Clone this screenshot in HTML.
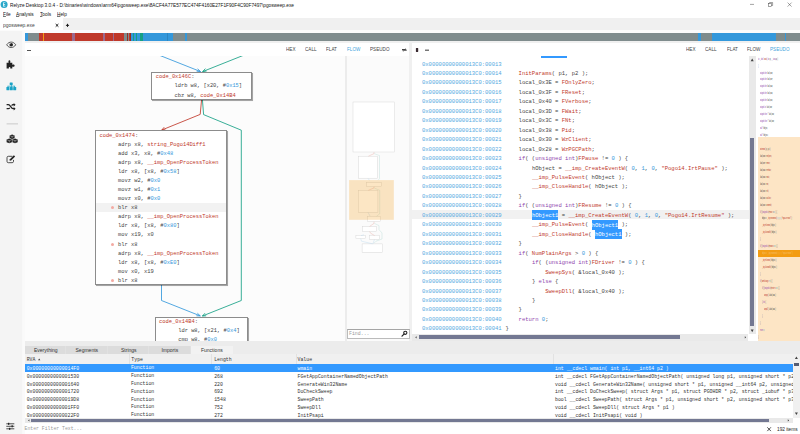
<!DOCTYPE html><html><head><meta charset="utf-8"><title>Relyze Desktop</title><style>
html,body{margin:0;padding:0;background:#fff;}
body{width:800px;height:434px;overflow:hidden;position:relative;font-family:"Liberation Sans",sans-serif;}
#app{position:absolute;left:0;top:0;width:800px;height:434px;overflow:hidden;background:#fff;}
#app div{position:absolute;white-space:pre;}
.s{font-family:"Liberation Sans",sans-serif;}
.m{font-family:"Liberation Mono",monospace;}
.r{color:#c0392b}.b{color:#3498db}.p{color:#8e44ad}.a{color:#52a8e1}.k{color:#444}
.sel{background:#3399ff;color:#fff;padding:1.5px 0 1.55px}
svg{position:absolute;overflow:visible}
</style></head><body><div id="app">
<svg style="left:0;top:0" width="10" height="10" viewBox="0 0 10 10"><circle cx="4.1" cy="4.4" r="3.5" fill="#2aa7c9"/><path d="M3 2.400h2.300v.700h-1.500v1h1.300v.700h-1.300v1h1.500v.700H3z" fill="#fff" opacity=".92"/></svg>
<div class="s" style="left:9.6px;top:0.70px;font-size:5.2px;line-height:8px;color:#111;transform:scaleX(0.916);transform-origin:0 50%;">Relyze Desktop 3.0.4 - D:\binaries\windows\arm64\pgosweep.exe\8ACF4A77E577EC474F4160E27F1F90F4C90F7497\pgosweep.exe</div>
<svg style="left:740px;top:0" width="60" height="10" viewBox="0 0 60 10"><g stroke="#333" stroke-width=".45" fill="none"><path d="M10 4.400h4"/><rect x="28.6" y="3.4" width="3" height="3"/><path d="M29.6 3.4v-.9h3v3h-1"/><path d="M47.6 2.6l4 4M51.6 2.6l-4 4"/></g></svg>
<div class="s" style="left:2.5px;top:9.7px;font-size:5.2px;line-height:8px;color:#111;transform:scaleX(.915);transform-origin:0 50%"><u style="text-decoration-thickness:.3px;text-underline-offset:.4px;text-decoration-color:#777">F</u>ile</div>
<div class="s" style="left:16px;top:9.7px;font-size:5.2px;line-height:8px;color:#111;transform:scaleX(.915);transform-origin:0 50%"><u style="text-decoration-thickness:.3px;text-underline-offset:.4px;text-decoration-color:#777">A</u>nalysis</div>
<div class="s" style="left:40.2px;top:9.7px;font-size:5.2px;line-height:8px;color:#111;transform:scaleX(.915);transform-origin:0 50%"><u style="text-decoration-thickness:.3px;text-underline-offset:.4px;text-decoration-color:#777">T</u>ools</div>
<div class="s" style="left:57px;top:9.7px;font-size:5.2px;line-height:8px;color:#111;transform:scaleX(.915);transform-origin:0 50%"><u style="text-decoration-thickness:.3px;text-underline-offset:.4px;text-decoration-color:#777">H</u>elp</div>
<div style="left:0px;top:17.7px;width:800px;height:12.6px;background:#f0f0f0;"></div>
<div style="left:0px;top:17.7px;width:62.5px;height:12.6px;background:#fff;"></div>
<div style="left:0px;top:30.3px;width:800px;height:2.7px;background:#fbfbfb;"></div>
<div class="s" style="left:3.1px;top:21.00px;font-size:5.2px;line-height:8px;color:#444;transform:scaleX(0.945);transform-origin:0 50%;">pgosweep.exe</div>
<svg style="left:54px;top:22px" width="18" height="7" viewBox="54 22 18 7"><path d="M55.700 24l2.700 2.700M58.400 24l-2.700 2.700" stroke="#1a1a1a" stroke-width="1" fill="none"/><path d="M67.500 23.800v3.100M65.950 25.350h3.100" stroke="#1a1a1a" stroke-width="1" fill="none"/></svg>
<div style="left:0px;top:31px;width:24.5px;height:403px;background:linear-gradient(90deg,#f4f4f4 0,#f4f4f4 21.8px,#fafafa 22.6px,#fafafa 24.5px);"></div>
<div style="left:24.5px;top:33px;width:775.5px;height:8px;background:#7f8c8d;"></div>
<div style="left:24.5px;top:33px;width:3.5px;height:8px;background:#3498db;"></div>
<div style="left:39px;top:33px;width:84.5px;height:8px;background:#c0392b;"></div>
<div style="left:43px;top:33px;width:0.8px;height:8px;background:#f39c12;"></div>
<div style="left:72.4px;top:33px;width:2.2px;height:8px;background:#9b6a8f;"></div>
<div style="left:103px;top:33px;width:1.6px;height:8px;background:#9b6a8f;"></div>
<div style="left:113px;top:33px;width:1px;height:8px;background:#9b6a8f;"></div>
<div style="left:126.5px;top:33px;width:4.5px;height:8px;background:#962d22;"></div>
<div style="left:127.6px;top:33px;width:0.6px;height:8px;background:#7f8c8d;"></div>
<div style="left:129.3px;top:33px;width:0.5px;height:8px;background:#c0392b;"></div>
<div style="left:131px;top:33px;width:42px;height:8px;background:#3498db;"></div>
<div style="left:133px;top:33px;width:1.4px;height:8px;background:#16a085;"></div>
<div style="left:136px;top:33px;width:1px;height:8px;background:#16a085;"></div>
<div style="left:140px;top:33px;width:3px;height:8px;background:#16a085;"></div>
<div style="left:167px;top:33px;width:0.5px;height:8px;background:#2e86c1;"></div>
<div style="left:185px;top:33px;width:2px;height:8px;background:#3498db;"></div>
<div style="left:697.5px;top:33px;width:3.5px;height:8px;background:#3498db;"></div>
<div style="left:712px;top:33px;width:63.5px;height:8px;background:#3498db;"></div>
<div style="left:785px;top:33px;width:0.6px;height:8px;background:#3498db;"></div>
<div style="left:24.5px;top:41px;width:775.5px;height:2.1px;background:#f0f0f0;"></div>
<div style="left:24.5px;top:43.1px;width:385px;height:12.5px;background:#fff;"></div>
<div style="left:24.5px;top:55.5px;width:321px;height:285.5px;background:#fcfcfc;"></div>
<div style="left:345.3px;top:55.5px;width:1.7px;height:285.5px;background:#ececec;"></div>
<div style="left:347px;top:55.5px;width:62.5px;height:285.5px;background:#fbfbfb;"></div>
<div style="left:409.3px;top:43.1px;width:2.7px;height:297.6px;background:#f0f0f0;"></div>
<div style="left:412px;top:43.1px;width:388px;height:297.6px;background:#fff;"></div>
<div class="s" style="left:286px;top:45.00px;font-size:5.2px;line-height:8px;color:#444;transform:scaleX(0.89);transform-origin:0 50%;">HEX</div>
<div class="s" style="left:305px;top:45.00px;font-size:5.2px;line-height:8px;color:#444;transform:scaleX(0.89);transform-origin:0 50%;">CALL</div>
<div class="s" style="left:326px;top:45.00px;font-size:5.2px;line-height:8px;color:#444;transform:scaleX(0.89);transform-origin:0 50%;">FLAT</div>
<div class="s" style="left:346.7px;top:45.00px;font-size:5.2px;line-height:8px;color:#3fa4dc;transform:scaleX(0.89);transform-origin:0 50%;">FLOW</div>
<div class="s" style="left:369.5px;top:45.00px;font-size:5.2px;line-height:8px;color:#444;transform:scaleX(0.89);transform-origin:0 50%;">PSEUDO</div>
<div class="s" style="left:686.4px;top:45.00px;font-size:5.2px;line-height:8px;color:#444;transform:scaleX(0.89);transform-origin:0 50%;">HEX</div>
<div class="s" style="left:705.3px;top:45.00px;font-size:5.2px;line-height:8px;color:#444;transform:scaleX(0.89);transform-origin:0 50%;">CALL</div>
<div class="s" style="left:726.6px;top:45.00px;font-size:5.2px;line-height:8px;color:#444;transform:scaleX(0.89);transform-origin:0 50%;">FLAT</div>
<div class="s" style="left:747px;top:45.00px;font-size:5.2px;line-height:8px;color:#444;transform:scaleX(0.89);transform-origin:0 50%;">FLOW</div>
<div class="s" style="left:770px;top:45.00px;font-size:5.2px;line-height:8px;color:#3fa4dc;transform:scaleX(0.89);transform-origin:0 50%;">PSEUDO</div>
<div style="left:27.1px;top:49.7px;width:3.8px;height:1.1px;background:#555;"></div>
<svg style="left:400px;top:44px" width="32" height="10" viewBox="400 44 32 10"><g fill="#444"><path d="M402 49.100h3.200v-.800l1.500 1.200l-1.500 .4H402zM406.700 51h-3.200v.800l-1.500-1.200l1.500-.4h3.200z"/><rect x="415.900" y="47.900" width="2.300" height="4.100" rx=".4" fill="#3a2a30"/><path d="M425 49.600h4v1.200h-4z" fill="#555"/></g></svg>
<div id="graph" style="left:24.5px;top:55.5px;width:320.8px;height:285px;overflow:hidden">
<svg style="left:-24.5px;top:-55.5px" width="800" height="434" viewBox="0 0 800 434"><g fill="none" stroke-width="0.85" stroke-linejoin="round"><path stroke="#3498db" d="M155 53.5L200.6 71.6M197.6 68.8L200.6 71.6L196.6 71.2"/><path stroke="#16a085" d="M248 53.5L202.6 71.6M205.4 68.6L202.6 71.6L206.6 71"/><path stroke="#c0392b" d="M201.6 99.5L200.2 114.4L161.8 130M164.2 127.2L161.8 130L165.4 129.8"/><path stroke="#16a085" d="M202.4 99.5L203.6 114.6L241.3 130.2L241.3 300.5L202.4 316M205 313.2L202.4 316L206.2 315.8"/><path stroke="#3498db" d="M161.5 285L161.5 300.5L200.3 315.9M197.4 313.2L200.3 315.9L196.4 315.8"/></g></svg>
<div style="left:126.80px;top:16.30px;width:100.5px;height:27.9px;background:#fff;border:1px solid #8c8c8c;box-sizing:border-box;box-shadow:.5px .5px .6px rgba(0,0,0,.35);"></div>
<div class="m k" style="left:131.30px;top:17.20px;font-size:5.37px;line-height:9px"><span class="r">code_0x146C</span>:</div>
<div class="m k" style="left:150.00px;top:26.20px;font-size:5.37px;line-height:9px">ldrb w8, [x20, #<span class="b">0x15</span>]</div>
<div class="m k" style="left:150.00px;top:36.40px;font-size:5.37px;line-height:9px">cbz w8, <span class="r">code_0x14B4</span></div>
<div style="left:70.90px;top:74.50px;width:132.1px;height:155.4px;background:#fff;border:1px solid #8c8c8c;box-sizing:border-box;box-shadow:.5px .5px .6px rgba(0,0,0,.35);"></div>
<div style="left:71.90px;top:147.70px;width:130.1px;height:9px;background:#f2f2f2;"></div>
<div class="m k" style="left:74.90px;top:75.00px;font-size:5.41px;line-height:9px"><span class="r">code_0x1474</span>:</div>
<div class="m k" style="left:93.50px;top:84.09px;font-size:5.41px;line-height:9px">adrp x8, <span class="r">string_Pogo14Diff1</span></div>
<div class="m k" style="left:93.50px;top:93.18px;font-size:5.41px;line-height:9px">add x3, x8, #<span class="b">0x48</span></div>
<div class="m k" style="left:93.50px;top:102.27px;font-size:5.41px;line-height:9px">adrp x8, <span class="r">__imp_OpenProcessToken</span></div>
<div class="m k" style="left:93.50px;top:111.36px;font-size:5.41px;line-height:9px">ldr x8, [x8, #<span class="b">0x58</span>]</div>
<div class="m k" style="left:93.50px;top:120.45px;font-size:5.41px;line-height:9px">movz w2, #<span class="b">0x0</span></div>
<div class="m k" style="left:93.50px;top:129.54px;font-size:5.41px;line-height:9px">movz w1, #<span class="b">0x1</span></div>
<div class="m k" style="left:93.50px;top:138.63px;font-size:5.41px;line-height:9px">movz x0, #<span class="b">0x0</span></div>
<div style="left:86.10px;top:150.92px;width:3px;height:3px;background:#f3aaa2;border-radius:50%"></div>
<div class="m k" style="left:93.50px;top:147.72px;font-size:5.41px;line-height:9px">blr x8</div>
<div class="m k" style="left:93.50px;top:156.81px;font-size:5.41px;line-height:9px">adrp x8, <span class="r">__imp_OpenProcessToken</span></div>
<div class="m k" style="left:93.50px;top:165.90px;font-size:5.41px;line-height:9px">ldr x8, [x8, #<span class="b">0x80</span>]</div>
<div class="m k" style="left:93.50px;top:174.99px;font-size:5.41px;line-height:9px">mov x19, x0</div>
<div style="left:86.10px;top:187.28px;width:3px;height:3px;background:#f3aaa2;border-radius:50%"></div>
<div class="m k" style="left:93.50px;top:184.08px;font-size:5.41px;line-height:9px">blr x8</div>
<div class="m k" style="left:93.50px;top:193.17px;font-size:5.41px;line-height:9px">adrp x8, <span class="r">__imp_OpenProcessToken</span></div>
<div class="m k" style="left:93.50px;top:202.26px;font-size:5.41px;line-height:9px">ldr x8, [x8, #<span class="b">0xE0</span>]</div>
<div class="m k" style="left:93.50px;top:211.35px;font-size:5.41px;line-height:9px">mov x0, x19</div>
<div style="left:86.10px;top:223.64px;width:3px;height:3px;background:#f3aaa2;border-radius:50%"></div>
<div class="m k" style="left:93.50px;top:220.44px;font-size:5.41px;line-height:9px">blr x8</div>
<div style="left:130.60px;top:261.20px;width:93.2px;height:40px;background:#fff;border:1px solid #8c8c8c;box-sizing:border-box;box-shadow:.5px .5px .6px rgba(0,0,0,.35);"></div>
<div class="m k" style="left:134.60px;top:262.20px;font-size:5.4px;line-height:9px"><span class="r">code_0x14B4</span>:</div>
<div class="m k" style="left:153.70px;top:271.10px;font-size:5.4px;line-height:9px">ldr w8, [x21, #<span class="b">0x4</span>]</div>
<div class="m k" style="left:153.70px;top:280.10px;font-size:5.4px;line-height:9px">cmp w8, #<span class="b">0x0</span></div>
</div>
<svg style="left:0;top:0" width="800" height="434" viewBox="0 0 800 434"><g fill="#fff" stroke="#d4d4d4" stroke-width=".45"><rect x="353" y="102" width="41.7" height="50"/><rect x="358.7" y="156.2" width="18.6" height="22"/><rect x="366.6" y="182.4" width="14.7" height="4.3"/><rect x="358.5" y="190.3" width="19.4" height="22"/><rect x="367.4" y="216.3" width="13.3" height="5.4"/><rect x="362.4" y="226.4" width="14.1" height="5.1"/><rect x="355.9" y="235.5" width="9.6" height="3"/><rect x="369.4" y="235.2" width="10.2" height="4.2"/><rect x="362.1" y="243.9" width="20.5" height="8.5"/></g><g fill="none" stroke-width=".4"><path stroke="#e8a9a2" d="M374 152.2v1.4l-5.6 2.6M374 186.7v1.200l-5.600 2.400M374 221.800v1.600l-4.400 3M369.600 231.600l1 1.600l4 2.400"/><path stroke="#b5dcd6" d="M374.200 153.600l5.300 2v23l-1.200 1.500M374.200 188l5.500 2.300v23.500l-3 2.400M374.400 223.400l4.600 2.200l0 4l3 3.400v6l-6 2.200l-2 2"/><path stroke="#b7d6ee" d="M368 178.300l1.400 2M368 212.300l2 3.800M360.700 238.600l.8 2.600l11 2.600M374.500 239.500l-1.600 4.300M364 234.800l-3 .800"/></g><rect x="349.1" y="180.100" width="44.700" height="39.700" fill="rgba(243,156,18,.25)"/></svg>
<div style="left:347px;top:328.7px;width:62.6px;height:10.1px;background:#fff;border:.6px solid #bbb;border-top-color:#a5a5a5;box-sizing:border-box"></div>
<div class="m" style="left:349px;top:329.60px;font-size:4.9px;line-height:8px;color:#9a9a9a;">Find...</div>
<svg style="left:399px;top:329.5px" width="9" height="8" viewBox="0 0 9 8"><circle cx="6.300" cy="2.800" r="1.600" fill="none" stroke="#222" stroke-width="1.100"/><path d="M5 4.200L3 6.200" stroke="#222" stroke-width="1.200" stroke-linecap="round"/></svg>
<div id="pseudo" style="left:411.7px;top:55.5px;width:337.3px;height:278.8px;overflow:hidden">
<div style="left:129.60px;top:0;width:26px;height:2.5px;background:#3399ff"></div>
<div style="left:0;top:154.68px;width:338px;height:9.3px;background:#f1f1f1"></div>
<div class="m a" style="left:10.30px;top:4.00px;font-size:5.54px;line-height:9px">0x00000000000013C0:00013</div>
<div class="m a" style="left:10.30px;top:13.46px;font-size:5.54px;line-height:9px">0x00000000000013C0:00014</div>
<div class="m k" style="left:106.90px;top:13.46px;font-size:5.54px;line-height:9px"><span class="r">InitParams</span>( p1, p2 );</div>
<div class="m a" style="left:10.30px;top:22.92px;font-size:5.54px;line-height:9px">0x00000000000013C0:00015</div>
<div class="m k" style="left:106.90px;top:22.92px;font-size:5.54px;line-height:9px">local_0x3E = <span class="r">FOnlyZero</span>;</div>
<div class="m a" style="left:10.30px;top:32.38px;font-size:5.54px;line-height:9px">0x00000000000013C0:00016</div>
<div class="m k" style="left:106.90px;top:32.38px;font-size:5.54px;line-height:9px">local_0x3F = <span class="r">FReset</span>;</div>
<div class="m a" style="left:10.30px;top:41.84px;font-size:5.54px;line-height:9px">0x00000000000013C0:00017</div>
<div class="m k" style="left:106.90px;top:41.84px;font-size:5.54px;line-height:9px">local_0x40 = <span class="r">FVerbose</span>;</div>
<div class="m a" style="left:10.30px;top:51.31px;font-size:5.54px;line-height:9px">0x00000000000013C0:00018</div>
<div class="m k" style="left:106.90px;top:51.31px;font-size:5.54px;line-height:9px">local_0x3D = <span class="r">FWait</span>;</div>
<div class="m a" style="left:10.30px;top:60.77px;font-size:5.54px;line-height:9px">0x00000000000013C0:00019</div>
<div class="m k" style="left:106.90px;top:60.77px;font-size:5.54px;line-height:9px">local_0x3C = <span class="r">FNt</span>;</div>
<div class="m a" style="left:10.30px;top:70.23px;font-size:5.54px;line-height:9px">0x00000000000013C0:00020</div>
<div class="m k" style="left:106.90px;top:70.23px;font-size:5.54px;line-height:9px">local_0x38 = <span class="r">Pid</span>;</div>
<div class="m a" style="left:10.30px;top:79.69px;font-size:5.54px;line-height:9px">0x00000000000013C0:00021</div>
<div class="m k" style="left:106.90px;top:79.69px;font-size:5.54px;line-height:9px">local_0x30 = <span class="r">WzClient</span>;</div>
<div class="m a" style="left:10.30px;top:89.15px;font-size:5.54px;line-height:9px">0x00000000000013C0:00022</div>
<div class="m k" style="left:106.90px;top:89.15px;font-size:5.54px;line-height:9px">local_0x28 = <span class="r">WzPGCPath</span>;</div>
<div class="m a" style="left:10.30px;top:98.61px;font-size:5.54px;line-height:9px">0x00000000000013C0:00023</div>
<div class="m k" style="left:106.90px;top:98.61px;font-size:5.54px;line-height:9px"><span class="p">if</span>( (<span class="p">unsigned int</span>)<span class="r">FPause</span> != <span class="b">0</span> ) {</div>
<div class="m a" style="left:10.30px;top:108.07px;font-size:5.54px;line-height:9px">0x00000000000013C0:00024</div>
<div class="m k" style="left:120.20px;top:108.07px;font-size:5.54px;line-height:9px">hObject = <span class="r">__imp_CreateEventW</span>( <span class="b">0</span>, <span class="b">1</span>, <span class="b">0</span>, <span class="r">"Pogo14.IrtPause"</span> );</div>
<div class="m a" style="left:10.30px;top:117.53px;font-size:5.54px;line-height:9px">0x00000000000013C0:00025</div>
<div class="m k" style="left:120.20px;top:117.53px;font-size:5.54px;line-height:9px"><span class="r">__imp_PulseEvent</span>( hObject );</div>
<div class="m a" style="left:10.30px;top:126.99px;font-size:5.54px;line-height:9px">0x00000000000013C0:00026</div>
<div class="m k" style="left:120.20px;top:126.99px;font-size:5.54px;line-height:9px"><span class="r">__imp_CloseHandle</span>( hObject );</div>
<div class="m a" style="left:10.30px;top:136.45px;font-size:5.54px;line-height:9px">0x00000000000013C0:00027</div>
<div class="m k" style="left:106.90px;top:136.45px;font-size:5.54px;line-height:9px">}</div>
<div class="m a" style="left:10.30px;top:145.91px;font-size:5.54px;line-height:9px">0x00000000000013C0:00028</div>
<div class="m k" style="left:106.90px;top:145.91px;font-size:5.54px;line-height:9px"><span class="p">if</span>( (<span class="p">unsigned int</span>)<span class="r">FResume</span> != <span class="b">0</span> ) {</div>
<div class="m a" style="left:10.30px;top:155.38px;font-size:5.54px;line-height:9px">0x00000000000013C0:00029</div>
<div class="m k" style="left:120.20px;top:155.38px;font-size:5.54px;line-height:9px"><span class="sel">hObject1</span> = <span class="r">__imp_CreateEventW</span>( <span class="b">0</span>, <span class="b">1</span>, <span class="b">0</span>, <span class="r">"Pogo14.IrtResume"</span> );</div>
<div class="m a" style="left:10.30px;top:164.84px;font-size:5.54px;line-height:9px">0x00000000000013C0:00030</div>
<div class="m k" style="left:120.20px;top:164.84px;font-size:5.54px;line-height:9px"><span class="r">__imp_PulseEvent</span>( <span class="sel">hObject1</span> );</div>
<div class="m a" style="left:10.30px;top:174.30px;font-size:5.54px;line-height:9px">0x00000000000013C0:00031</div>
<div class="m k" style="left:120.20px;top:174.30px;font-size:5.54px;line-height:9px"><span class="r">__imp_CloseHandle</span>( <span class="sel">hObject1</span> );</div>
<div class="m a" style="left:10.30px;top:183.76px;font-size:5.54px;line-height:9px">0x00000000000013C0:00032</div>
<div class="m k" style="left:106.90px;top:183.76px;font-size:5.54px;line-height:9px">}</div>
<div class="m a" style="left:10.30px;top:193.22px;font-size:5.54px;line-height:9px">0x00000000000013C0:00033</div>
<div class="m k" style="left:106.90px;top:193.22px;font-size:5.54px;line-height:9px"><span class="p">if</span>( <span class="r">NumPlainArgs</span> > <span class="b">0</span> ) {</div>
<div class="m a" style="left:10.30px;top:202.68px;font-size:5.54px;line-height:9px">0x00000000000013C0:00034</div>
<div class="m k" style="left:120.20px;top:202.68px;font-size:5.54px;line-height:9px"><span class="p">if</span>( (<span class="p">unsigned int</span>)<span class="r">FDriver</span> != <span class="b">0</span> ) {</div>
<div class="m a" style="left:10.30px;top:212.14px;font-size:5.54px;line-height:9px">0x00000000000013C0:00035</div>
<div class="m k" style="left:133.49px;top:212.14px;font-size:5.54px;line-height:9px"><span class="r">SweepSys</span>( &amp;local_0x40 );</div>
<div class="m a" style="left:10.30px;top:221.60px;font-size:5.54px;line-height:9px">0x00000000000013C0:00036</div>
<div class="m k" style="left:120.20px;top:221.60px;font-size:5.54px;line-height:9px">} <span class="p">else</span> {</div>
<div class="m a" style="left:10.30px;top:231.06px;font-size:5.54px;line-height:9px">0x00000000000013C0:00037</div>
<div class="m k" style="left:133.49px;top:231.06px;font-size:5.54px;line-height:9px"><span class="r">SweepDll</span>( &amp;local_0x40 );</div>
<div class="m a" style="left:10.30px;top:240.52px;font-size:5.54px;line-height:9px">0x00000000000013C0:00038</div>
<div class="m k" style="left:120.20px;top:240.52px;font-size:5.54px;line-height:9px">}</div>
<div class="m a" style="left:10.30px;top:249.99px;font-size:5.54px;line-height:9px">0x00000000000013C0:00039</div>
<div class="m k" style="left:106.90px;top:249.99px;font-size:5.54px;line-height:9px">}</div>
<div class="m a" style="left:10.30px;top:259.45px;font-size:5.54px;line-height:9px">0x00000000000013C0:00040</div>
<div class="m k" style="left:106.90px;top:259.45px;font-size:5.54px;line-height:9px"><span class="p">return</span> <span class="b">0</span>;</div>
<div class="m a" style="left:10.30px;top:268.91px;font-size:5.54px;line-height:9px">0x00000000000013C0:00041</div>
<div class="m k" style="left:93.90px;top:268.91px;font-size:5.54px;line-height:9px">}</div>
</div>
<div style="left:411.7px;top:334.3px;width:336.7px;height:6.4px;background:#e9e9e9;"></div>
<div style="left:419px;top:335.2px;width:261.1px;height:4.2px;background:#737892;"></div>
<svg style="left:411.7px;top:335px" width="338" height="4.5" viewBox="0 0 338 4.5"><path d="M4.6 1.2L3.2 2.3L4.6 3.4zM332.8 1.2L334.2 2.3L332.8 3.4z" fill="#444"/></svg>
<div style="left:749px;top:55.5px;width:7.1px;height:278.3px;background:#e9e9e9;"></div>
<div style="left:750.1px;top:137.8px;width:4.3px;height:188.6px;background:#737892;"></div>
<svg style="left:749px;top:55.5px" width="8" height="280" viewBox="0 0 8 280"><path d="M3.2 2.6L1.7 5.2H4.7zM3.2 276.2L1.7 273.6H4.7z" fill="#444"/></svg>
<div style="left:756.1px;top:55.5px;width:43.9px;height:285.2px;background:#fff;"></div>
<div style="left:748.4px;top:333.8px;width:8px;height:7px;background:#fff;"></div>
<div style="left:758.2px;top:136.7px;width:41.8px;height:204px;background:#fde5c5;"></div>
<div style="left:758.2px;top:250.1px;width:41.8px;height:6.6px;background:#f39c12;"></div>
<div id="mini" style="left:758px;top:55.5px;width:42px;height:285.2px;overflow:hidden">
<div class="m k" style="left:0.0px;top:1.10px;font-size:3.8px;line-height:5px;transform:scaleX(.225);transform-origin:0 50%;font-weight:bold"><span class="p">int __cdecl</span> <span class="r">wmain</span>( <span class="p">int</span> p1, <span class="p">__int64</span> p2 )</div>
<div class="m k" style="left:0.0px;top:8.05px;font-size:3.8px;line-height:5px;transform:scaleX(.225);transform-origin:0 50%;font-weight:bold">{</div>
<div class="m k" style="left:2.0px;top:15.00px;font-size:3.8px;line-height:5px;transform:scaleX(.225);transform-origin:0 50%;font-weight:bold"><span class="p">unsigned char</span> local_0x3E;</div>
<div class="m k" style="left:2.0px;top:21.95px;font-size:3.8px;line-height:5px;transform:scaleX(.225);transform-origin:0 50%;font-weight:bold"><span class="p">unsigned char</span> local_0x3F;</div>
<div class="m k" style="left:2.0px;top:28.90px;font-size:3.8px;line-height:5px;transform:scaleX(.225);transform-origin:0 50%;font-weight:bold"><span class="p">unsigned char</span> local_0x40;</div>
<div class="m k" style="left:2.0px;top:35.85px;font-size:3.8px;line-height:5px;transform:scaleX(.225);transform-origin:0 50%;font-weight:bold"><span class="p">unsigned char</span> local_0x3D;</div>
<div class="m k" style="left:2.0px;top:42.80px;font-size:3.8px;line-height:5px;transform:scaleX(.225);transform-origin:0 50%;font-weight:bold"><span class="p">unsigned char</span> local_0x3C;</div>
<div class="m k" style="left:2.0px;top:49.75px;font-size:3.8px;line-height:5px;transform:scaleX(.225);transform-origin:0 50%;font-weight:bold"><span class="p">unsigned int</span> local_0x38;</div>
<div class="m k" style="left:2.0px;top:56.70px;font-size:3.8px;line-height:5px;transform:scaleX(.225);transform-origin:0 50%;font-weight:bold"><span class="p">unsigned short *</span> local_0x30;</div>
<div class="m k" style="left:2.0px;top:63.65px;font-size:3.8px;line-height:5px;transform:scaleX(.225);transform-origin:0 50%;font-weight:bold"><span class="p">unsigned short *</span> local_0x28;</div>
<div class="m k" style="left:2.0px;top:70.60px;font-size:3.8px;line-height:5px;transform:scaleX(.225);transform-origin:0 50%;font-weight:bold"><span class="p">void *</span> hObject;</div>
<div class="m k" style="left:2.0px;top:77.55px;font-size:3.8px;line-height:5px;transform:scaleX(.225);transform-origin:0 50%;font-weight:bold"><span class="p">void *</span> hObject1;</div>
<div class="m k" style="left:2.0px;top:91.45px;font-size:3.8px;line-height:5px;transform:scaleX(.225);transform-origin:0 50%;font-weight:bold"><span class="r">InitParams</span>( p1, p2 );</div>
<div class="m k" style="left:2.0px;top:98.40px;font-size:3.8px;line-height:5px;transform:scaleX(.225);transform-origin:0 50%;font-weight:bold">local_0x3E = <span class="r">FOnlyZero</span>;</div>
<div class="m k" style="left:2.0px;top:105.35px;font-size:3.8px;line-height:5px;transform:scaleX(.225);transform-origin:0 50%;font-weight:bold">local_0x3F = <span class="r">FReset</span>;</div>
<div class="m k" style="left:2.0px;top:112.30px;font-size:3.8px;line-height:5px;transform:scaleX(.225);transform-origin:0 50%;font-weight:bold">local_0x40 = <span class="r">FVerbose</span>;</div>
<div class="m k" style="left:2.0px;top:119.25px;font-size:3.8px;line-height:5px;transform:scaleX(.225);transform-origin:0 50%;font-weight:bold">local_0x3D = <span class="r">FWait</span>;</div>
<div class="m k" style="left:2.0px;top:126.20px;font-size:3.8px;line-height:5px;transform:scaleX(.225);transform-origin:0 50%;font-weight:bold">local_0x3C = <span class="r">FNt</span>;</div>
<div class="m k" style="left:2.0px;top:133.15px;font-size:3.8px;line-height:5px;transform:scaleX(.225);transform-origin:0 50%;font-weight:bold">local_0x38 = <span class="r">Pid</span>;</div>
<div class="m k" style="left:2.0px;top:140.10px;font-size:3.8px;line-height:5px;transform:scaleX(.225);transform-origin:0 50%;font-weight:bold">local_0x30 = <span class="r">WzClient</span>;</div>
<div class="m k" style="left:2.0px;top:147.05px;font-size:3.8px;line-height:5px;transform:scaleX(.225);transform-origin:0 50%;font-weight:bold">local_0x28 = <span class="r">WzPGCPath</span>;</div>
<div class="m k" style="left:2.0px;top:154.00px;font-size:3.8px;line-height:5px;transform:scaleX(.225);transform-origin:0 50%;font-weight:bold"><span class="p">if</span>( (<span class="p">unsigned int</span>)<span class="r">FPause</span> != <span class="b">0</span> ) {</div>
<div class="m k" style="left:4.0px;top:160.95px;font-size:3.8px;line-height:5px;transform:scaleX(.225);transform-origin:0 50%;font-weight:bold">hObject = <span class="r">__imp_CreateEventW</span>( <span class="b">0</span>, <span class="b">1</span>, <span class="b">0</span>, <span class="r">"Pogo14.IrtPause"</span> );</div>
<div class="m k" style="left:4.0px;top:167.90px;font-size:3.8px;line-height:5px;transform:scaleX(.225);transform-origin:0 50%;font-weight:bold"><span class="r">__imp_PulseEvent</span>( hObject );</div>
<div class="m k" style="left:4.0px;top:174.85px;font-size:3.8px;line-height:5px;transform:scaleX(.225);transform-origin:0 50%;font-weight:bold"><span class="r">__imp_CloseHandle</span>( hObject );</div>
<div class="m k" style="left:2.0px;top:181.80px;font-size:3.8px;line-height:5px;transform:scaleX(.225);transform-origin:0 50%;font-weight:bold">}</div>
<div class="m k" style="left:2.0px;top:188.75px;font-size:3.8px;line-height:5px;transform:scaleX(.225);transform-origin:0 50%;font-weight:bold"><span class="p">if</span>( (<span class="p">unsigned int</span>)<span class="r">FResume</span> != <span class="b">0</span> ) {</div>
<div class="m k" style="left:4.0px;top:195.70px;font-size:3.8px;line-height:5px;transform:scaleX(.225);transform-origin:0 50%;font-weight:bold"><span style="color:#fff;opacity:.3">hObject1 = __imp_CreateEventW( 0, 1, 0, "Pogo14.IrtResume" );</span></div>
<div class="m k" style="left:4.0px;top:202.65px;font-size:3.8px;line-height:5px;transform:scaleX(.225);transform-origin:0 50%;font-weight:bold"><span class="r">__imp_PulseEvent</span>( <span >hObject1</span> );</div>
<div class="m k" style="left:4.0px;top:209.60px;font-size:3.8px;line-height:5px;transform:scaleX(.225);transform-origin:0 50%;font-weight:bold"><span class="r">__imp_CloseHandle</span>( <span >hObject1</span> );</div>
<div class="m k" style="left:2.0px;top:216.55px;font-size:3.8px;line-height:5px;transform:scaleX(.225);transform-origin:0 50%;font-weight:bold">}</div>
<div class="m k" style="left:2.0px;top:223.50px;font-size:3.8px;line-height:5px;transform:scaleX(.225);transform-origin:0 50%;font-weight:bold"><span class="p">if</span>( <span class="r">NumPlainArgs</span> > <span class="b">0</span> ) {</div>
<div class="m k" style="left:4.0px;top:230.45px;font-size:3.8px;line-height:5px;transform:scaleX(.225);transform-origin:0 50%;font-weight:bold"><span class="p">if</span>( (<span class="p">unsigned int</span>)<span class="r">FDriver</span> != <span class="b">0</span> ) {</div>
<div class="m k" style="left:6.0px;top:237.40px;font-size:3.8px;line-height:5px;transform:scaleX(.225);transform-origin:0 50%;font-weight:bold"><span class="r">SweepSys</span>( &amp;local_0x40 );</div>
<div class="m k" style="left:4.0px;top:244.35px;font-size:3.8px;line-height:5px;transform:scaleX(.225);transform-origin:0 50%;font-weight:bold">} <span class="p">else</span> {</div>
<div class="m k" style="left:6.0px;top:251.30px;font-size:3.8px;line-height:5px;transform:scaleX(.225);transform-origin:0 50%;font-weight:bold"><span class="r">SweepDll</span>( &amp;local_0x40 );</div>
<div class="m k" style="left:4.0px;top:258.25px;font-size:3.8px;line-height:5px;transform:scaleX(.225);transform-origin:0 50%;font-weight:bold">}</div>
<div class="m k" style="left:2.0px;top:265.20px;font-size:3.8px;line-height:5px;transform:scaleX(.225);transform-origin:0 50%;font-weight:bold">}</div>
<div class="m k" style="left:2.0px;top:272.15px;font-size:3.8px;line-height:5px;transform:scaleX(.225);transform-origin:0 50%;font-weight:bold"><span class="p">return</span> <span class="b">0</span>;</div>
<div class="m k" style="left:0.0px;top:279.10px;font-size:3.8px;line-height:5px;transform:scaleX(.225);transform-origin:0 50%;font-weight:bold">}</div>
</div>
<div style="left:24.5px;top:340.7px;width:775.5px;height:13.6px;background:#ececec;"></div>
<div style="left:24.5px;top:345.6px;width:41.65px;height:8.4px;background:#dcdcdc;box-shadow:inset -.5px 0 0 #e6e6e6"></div>
<div class="s" style="left:24.50px;top:345.8px;width:41.65px;text-align:center;font-size:5.4px;line-height:8px;color:#333;transform:scaleX(.93)">Everything</div>
<div style="left:66.15px;top:345.6px;width:41.65px;height:8.4px;background:#dcdcdc;box-shadow:inset -.5px 0 0 #e6e6e6"></div>
<div class="s" style="left:66.15px;top:345.8px;width:41.65px;text-align:center;font-size:5.4px;line-height:8px;color:#333;transform:scaleX(.93)">Segments</div>
<div style="left:107.8px;top:345.6px;width:41.65px;height:8.4px;background:#dcdcdc;box-shadow:inset -.5px 0 0 #e6e6e6"></div>
<div class="s" style="left:107.80px;top:345.8px;width:41.65px;text-align:center;font-size:5.4px;line-height:8px;color:#333;transform:scaleX(.93)">Strings</div>
<div style="left:149.45px;top:345.6px;width:41.65px;height:8.4px;background:#dcdcdc;box-shadow:inset -.5px 0 0 #e6e6e6"></div>
<div class="s" style="left:149.45px;top:345.8px;width:41.65px;text-align:center;font-size:5.4px;line-height:8px;color:#333;transform:scaleX(.93)">Imports</div>
<div style="left:191.1px;top:345.6px;width:41.65px;height:8.4px;background:#f2f2f2;"></div>
<div class="s" style="left:191.10px;top:345.8px;width:41.65px;text-align:center;font-size:5.4px;line-height:8px;color:#333;transform:scaleX(.93)">Functions</div>
<div style="left:24.5px;top:354px;width:775.5px;height:9.8px;background:#f0f0f0;"></div>
<div style="left:128.7px;top:354px;width:0.6px;height:9.8px;background:#e2e2e2;"></div>
<div style="left:211px;top:354px;width:0.6px;height:9.8px;background:#e2e2e2;"></div>
<div style="left:295.5px;top:354px;width:0.6px;height:9.8px;background:#e2e2e2;"></div>
<div style="left:552.5px;top:354px;width:0.6px;height:9.8px;background:#e2e2e2;"></div>
<div class="m" style="left:26.7px;top:355.90px;font-size:4.8px;line-height:8px;color:#333;">RVA</div>
<svg style="left:37.6px;top:358.4px" width="3" height="3" viewBox="0 0 3 3"><path d="M1.2 .5L2.3 2.3H.1z" fill="#333"/></svg>
<div class="m" style="left:131.3px;top:355.90px;font-size:4.87px;line-height:8px;color:#333;">Type</div>
<div class="m" style="left:214.2px;top:355.90px;font-size:4.87px;line-height:8px;color:#333;">Length</div>
<div class="m" style="left:297.5px;top:355.90px;font-size:4.87px;line-height:8px;color:#333;">Value</div>
<div style="left:24.5px;top:363.8px;width:775.5px;height:54px;background:#fff;"></div>
<div style="left:24.5px;top:364.4px;width:768.7px;height:7.6px;background:#3399ff;"></div>
<div id="rows" style="left:24.5px;top:363.8px;width:768.7px;height:53.8px;overflow:hidden">
<div class="m" style="left:2.20px;top:1.30px;font-size:4.87px;line-height:8px;color:#fff">0x00000000000014F0</div>
<div class="m" style="left:106.40px;top:0.70px;font-size:4.87px;line-height:8px;color:#fff">Function</div>
<div class="m" style="left:189.70px;top:1.30px;font-size:4.87px;line-height:8px;color:#fff">60</div>
<div class="m" style="left:273.00px;top:1.30px;font-size:4.87px;line-height:8px;color:#fff">wmain</div>
<div class="m" style="left:530.50px;top:1.30px;font-size:4.87px;line-height:8px;color:#fff">int __cdecl wmain( int p1, __int64 p2 )</div>
<div class="m" style="left:2.20px;top:9.10px;font-size:4.87px;line-height:8px;color:#333">0x0000000000001530</div>
<div class="m" style="left:106.40px;top:8.50px;font-size:4.87px;line-height:8px;color:#333">Function</div>
<div class="m" style="left:189.70px;top:9.10px;font-size:4.87px;line-height:8px;color:#333">268</div>
<div class="m" style="left:273.00px;top:9.10px;font-size:4.87px;line-height:8px;color:#333">FGetAppContainerNamedObjectPath</div>
<div class="m" style="left:530.50px;top:9.10px;font-size:4.87px;line-height:8px;color:#333">int __cdecl FGetAppContainerNamedObjectPath( unsigned long p1, unsigned short * p2, unsigned __int64 p3 )</div>
<div class="m" style="left:2.20px;top:16.90px;font-size:4.87px;line-height:8px;color:#333">0x0000000000001640</div>
<div class="m" style="left:106.40px;top:16.30px;font-size:4.87px;line-height:8px;color:#333">Function</div>
<div class="m" style="left:189.70px;top:16.90px;font-size:4.87px;line-height:8px;color:#333">220</div>
<div class="m" style="left:273.00px;top:16.90px;font-size:4.87px;line-height:8px;color:#333">GenerateWin32Name</div>
<div class="m" style="left:530.50px;top:16.90px;font-size:4.87px;line-height:8px;color:#333">void __cdecl GenerateWin32Name( unsigned short * p1, unsigned __int64 p2, unsigned short * p3 )</div>
<div class="m" style="left:2.20px;top:24.70px;font-size:4.87px;line-height:8px;color:#333">0x0000000000001720</div>
<div class="m" style="left:106.40px;top:24.10px;font-size:4.87px;line-height:8px;color:#333">Function</div>
<div class="m" style="left:189.70px;top:24.70px;font-size:4.87px;line-height:8px;color:#333">692</div>
<div class="m" style="left:273.00px;top:24.70px;font-size:4.87px;line-height:8px;color:#333">DoCheckSweep</div>
<div class="m" style="left:530.50px;top:24.70px;font-size:4.87px;line-height:8px;color:#333">int __cdecl DoCheckSweep( struct Args * p1, struct PGOHDR * p2, struct _iobuf * p3 )</div>
<div class="m" style="left:2.20px;top:32.50px;font-size:4.87px;line-height:8px;color:#333">0x00000000000019D8</div>
<div class="m" style="left:106.40px;top:31.90px;font-size:4.87px;line-height:8px;color:#333">Function</div>
<div class="m" style="left:189.70px;top:32.50px;font-size:4.87px;line-height:8px;color:#333">1548</div>
<div class="m" style="left:273.00px;top:32.50px;font-size:4.87px;line-height:8px;color:#333">SweepPath</div>
<div class="m" style="left:530.50px;top:32.50px;font-size:4.87px;line-height:8px;color:#333">bool __cdecl SweepPath( struct Args * p1, unsigned short * p2, unsigned short * p3 )</div>
<div class="m" style="left:2.20px;top:40.30px;font-size:4.87px;line-height:8px;color:#333">0x0000000000001FF0</div>
<div class="m" style="left:106.40px;top:39.70px;font-size:4.87px;line-height:8px;color:#333">Function</div>
<div class="m" style="left:189.70px;top:40.30px;font-size:4.87px;line-height:8px;color:#333">752</div>
<div class="m" style="left:273.00px;top:40.30px;font-size:4.87px;line-height:8px;color:#333">SweepDll</div>
<div class="m" style="left:530.50px;top:40.30px;font-size:4.87px;line-height:8px;color:#333">void __cdecl SweepDll( struct Args * p1 )</div>
<div class="m" style="left:2.20px;top:48.10px;font-size:4.87px;line-height:8px;color:#333">0x00000000000022F0</div>
<div class="m" style="left:106.40px;top:47.50px;font-size:4.87px;line-height:8px;color:#333">Function</div>
<div class="m" style="left:189.70px;top:48.10px;font-size:4.87px;line-height:8px;color:#333">272</div>
<div class="m" style="left:273.00px;top:48.10px;font-size:4.87px;line-height:8px;color:#333">InitPsapi</div>
<div class="m" style="left:530.50px;top:48.10px;font-size:4.87px;line-height:8px;color:#333">void __cdecl InitPsapi( void )</div>
</div>
<div style="left:793.2px;top:354px;width:6.8px;height:63.8px;background:#f0f0f0;"></div>
<div style="left:794px;top:363.4px;width:5px;height:3px;background:#555b70;"></div>
<svg style="left:793.2px;top:354px" width="7" height="64" viewBox="0 0 7 64"><path d="M3.4 2.6L1.9 5H4.9zM3.4 61L1.9 58.6H4.9z" fill="#444"/></svg>
<div style="left:24.5px;top:417.6px;width:768.7px;height:5.6px;background:#e9e9e9;"></div>
<div style="left:31.2px;top:418.9px;width:738.2px;height:3.5px;background:#737892;"></div>
<svg style="left:24.5px;top:418.3px" width="769" height="4.7" viewBox="0 0 769 4.7"><path d="M3.4 1.3L2 2.4L3.4 3.5zM763.8 1.3L765.2 2.4L763.8 3.5z" fill="#444"/></svg>
<div style="left:793.2px;top:417.6px;width:6.8px;height:5.6px;background:#fff;"></div>
<div style="left:24.5px;top:423.2px;width:775.5px;height:10.8px;background:#fff;"></div>
<div class="m" style="left:24.6px;top:425.20px;font-size:4.8px;line-height:8px;color:#999;">Enter Filter Text...</div>
<svg style="left:766px;top:426px" width="6" height="6" viewBox="766 426 6 6"><path d="M767.300 427.300l3.600 3.800M770.900 427.300l-3.600 3.800" stroke="#222" stroke-width=".8" fill="none"/></svg>
<div class="s" style="left:777.4px;top:425.00px;font-size:5.2px;line-height:8px;color:#222;transform:scaleX(0.915);transform-origin:0 50%;">192 items</div>
<svg style="left:0;top:32.5px" width="24.5" height="401.5" viewBox="0 32.5 24.5 401.5"><path d="M6.700 44.300C8 42.300 9.600 41.600 11.200 41.600S14.400 42.300 15.700 44.300C14.400 46.300 12.800 47 11.200 47S8 46.300 6.700 44.300Z" fill="none" stroke="#333" stroke-width=".800"/><circle cx="11.200" cy="44.200" r="1.800" fill="#222"/><path d="M10 43.8a1.200 1.200 0 0 1 1.200-1.200" stroke="#f4f4f4" stroke-width=".45" fill="none"/><path transform="translate(0,-.4)" d="M6.600 62.700h2.100c-.4-.5-.5-2.600.7-2.600s1.100 2.100 .7 2.600h2.200v2.100c.5-.4 2.300-.600 2.300.8s-1.800 1.200-2.300.8v1.900h-2.100c.3-.6.300-1.500-.6-1.500s-1 .9-.6 1.500H6.600z" fill="#222"/><g fill="#1ba3c6"><rect x="9.700" y="81.900" width="3" height="2.700" rx=".5"/><rect x="6.400" y="86.500" width="3" height="3.300" rx=".6"/><rect x="9.800" y="86.500" width="3" height="3.300" rx=".6"/><rect x="13.200" y="86.500" width="3" height="3.300" rx=".6"/><path d="M10.900 84.300h.8v2.500h-.8zM7.500 85.200h7.600v.7h-7.600zM7.500 85.200h.8v1.500h-.8zM14.300 85.200h.8v1.500h-.8z"/></g><g fill="none" stroke="#222" stroke-width="1.250"><path d="M6.600 104.200h1.800c2 0 2.600 4 4.600 4h1.300M6.600 108.200h1.800c.6 0 1-.4 1.400-.9M11.600 105.100c.4-.5.800-.9 1.400-.9h1.300"/></g><path d="M13.700 102.500l1.900 1.700l-1.900 1.700zM13.700 106.500l1.900 1.700l-1.900 1.700z" fill="#222"/><path d="M6.600 123.150h11.400v.55H6.600z" fill="#a6a6a6"/><g fill="#222"><path d="M12.100 134l2.500 1v2.600l-2.500 1.100l-2.500-1.100v-2.600z"/><path d="M9.300 138l2.600 1.100v2.600l-2.600 1.100l-2.700-1.100v-2.600z"/><path d="M15 138l2.700 1.100v2.600l-2.700 1.100l-2.600-1.100v-2.600z"/></g><g fill="none" stroke="#f4f4f4" stroke-width=".4"><path d="M10.200 135.300l1.900.8l1.900-.8M12.100 136.100v2M7.200 139.400l2.100.8l2-.8M9.300 140.200v2M13 139.400l2 .8l2.100-.8M15 140.200v2"/></g><path d="M12.400 155.800H8.300c-.8 0-1.300.5-1.300 1.300v3.800c0 .8.500 1.300 1.300 1.300h3.900c.8 0 1.300-.5 1.300-1.300v-1.500" fill="none" stroke="#222" stroke-width=".8"/><path d="M9.600 160.200l.3-1.500l4-4.000l1.200 1.200l-4 4.000z" fill="#222"/><g stroke="#222" stroke-width=".8" fill="none"><path d="M6.300 423.300h8M6.300 425.800h8M6.300 428.300h8"/></g><g fill="#222"><rect x="8" y="422.300" width="1.300" height="2"/><rect x="11.500" y="424.800" width="1.300" height="2"/><rect x="9" y="427.300" width="1.300" height="2"/></g></svg>
</div></body></html>
